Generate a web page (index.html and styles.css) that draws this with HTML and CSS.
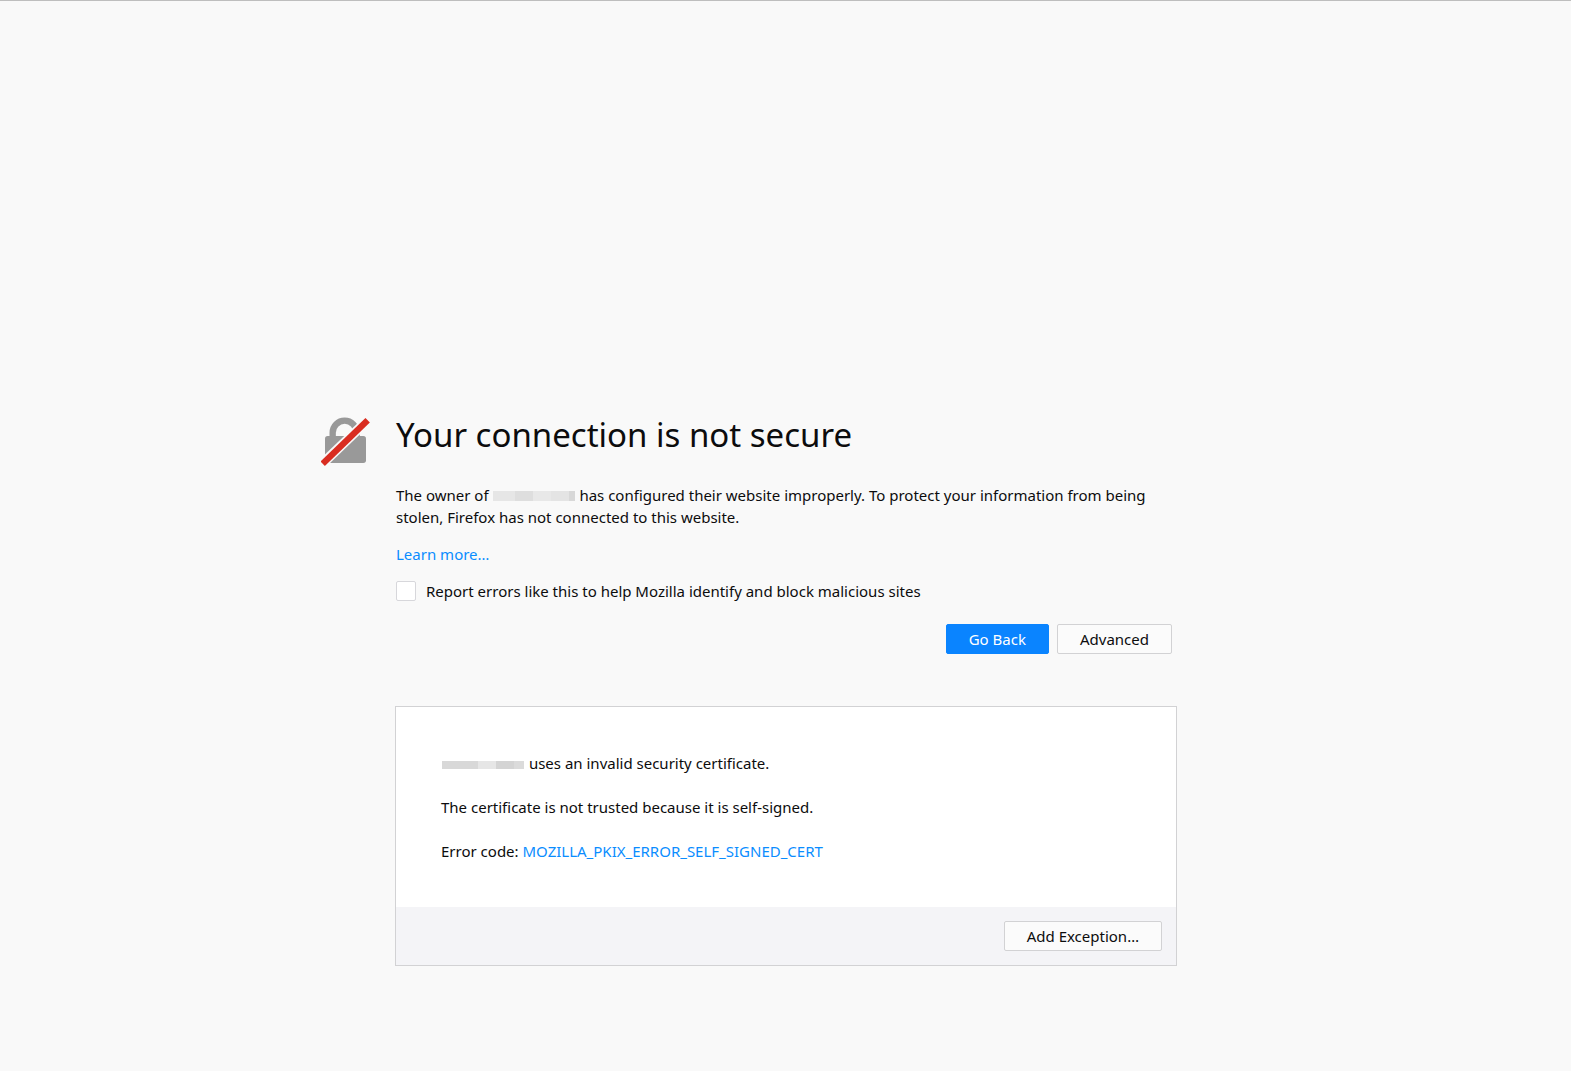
FILE: index.html
```
<!DOCTYPE html>
<html lang="en">
<head>
<meta charset="utf-8">
<meta name="viewport" content="width=device-width, initial-scale=1">
<title>Insecure Connection</title>
<link rel="stylesheet" href="styles.css">
</head>
<body>
<svg class="lock" viewBox="33 36 150 150" aria-hidden="true">
  <path d="M68 98V83a36 36 0 0 1 72 0v15" fill="none" stroke="#999" stroke-width="19"/>
  <rect x="45" y="93" width="123" height="81" rx="8" fill="#999"/>
  <path d="M34 179L178 41" stroke="#f9f9f9" stroke-width="29"/>
  <path d="M38 176L173 46" stroke="#d92d21" stroke-width="19"/>
</svg>
<main class="message">
  <h1 class="title">Your connection is not secure</h1>
  <p class="text">The owner of <span class="redacted redacted-owner"></span> has configured their website improperly. To protect your information from being stolen, Firefox has not connected to this website.</p>
  <p class="text"><a class="link" href="#">Learn more…</a></p>
  <div class="report">
    <input class="checkbox" type="checkbox" id="report">
    <label for="report">Report errors like this to help Mozilla identify and block malicious sites</label>
  </div>
  <div class="actions">
    <button class="button button-primary" type="button">Go Back</button>
    <button class="button" type="button">Advanced</button>
  </div>
</main>
<section class="panel">
  <div class="panel-body">
    <p class="detail"><span class="redacted redacted-site"></span> uses an invalid security certificate.</p>
    <p class="detail">The certificate is not trusted because it is self-signed.</p>
    <p class="detail">Error code: <a class="link" href="#">MOZILLA_PKIX_ERROR_SELF_SIGNED_CERT</a></p>
  </div>
  <div class="panel-footer">
    <button class="button" type="button">Add Exception…</button>
  </div>
</section>
</body>
</html>
```
FILE: styles.css
```
* {
  box-sizing: border-box;
}

body {
  display: grid;
  grid-template-columns: minmax(74px, 1fr) minmax(0, 782px) minmax(0, 1fr);
  grid-template-rows: 1fr auto 1fr;
  min-height: 100vh;
  margin: 0;
  padding: 0 0 2px 1px;
  border-top: 1px solid #bebebe;
  background: #f9f9f9;
  color: #0c0c0d;
  font: 15px/22px "Noto Sans", sans-serif;
}

.lock {
  grid-column: 1;
  grid-row: 2;
  justify-self: end;
  width: 50px;
  height: 50px;
  margin-right: 24px;
}

.message {
  grid-column: 2;
  grid-row: 2;
  padding: 0 5px 0 1px;
}

.title {
  margin: 0 0 31px;
  font-size: 33px;
  font-weight: 400;
  line-height: 36px;
}

.text {
  margin: 0 0 15px;
}

.link {
  color: #0a8dff;
  text-decoration: none;
}

.link:hover {
  text-decoration: underline;
}

.redacted {
  display: inline-block;
  width: 82px;
  margin: 0 1px;
}

.redacted-owner {
  height: 10px;
  margin-left: 0;
  background: linear-gradient(90deg, #e6e6e6 22px, #dedede 22px 40px, #e8e8e8 40px 58px, #e4e4e4 58px 76px, #d8d8d8 76px);
}

.redacted-site {
  height: 8px;
  background: linear-gradient(90deg, #d8d8d8 36px, #e6e6e6 36px 54px, #d4d4d4 54px 72px, #dbdbdb 72px);
}

.report {
  display: flex;
  align-items: center;
  gap: 10px;
}

.checkbox {
  appearance: none;
  width: 20px;
  height: 20px;
  margin: 0;
  border: 1px solid #d7d7db;
  border-radius: 2px;
  background: #fff;
}

.checkbox:checked {
  background: #0a84ff;
}

.actions {
  display: flex;
  justify-content: flex-end;
  gap: 8px;
  margin-top: 22px;
}

.button {
  height: 30px;
  padding: 0 22px;
  border: 1px solid #d2d2d4;
  border-radius: 2px;
  background: #fbfbfb;
  color: inherit;
  font: inherit;
}

.button-primary {
  border-color: #0a84ff;
  background: #0a84ff;
  color: #fff;
}

.panel {
  grid-column: 2;
  grid-row: 3;
  align-self: start;
  margin: 52px 0;
  border: 1px solid #d2d2d4;
  background: #fff;
}

.panel-body {
  display: grid;
  gap: 22px;
  padding: 45px;
}

.detail {
  margin: 0;
}

.panel-footer {
  display: flex;
  justify-content: flex-end;
  padding: 14px;
  background: #f4f4f7;
}
```
